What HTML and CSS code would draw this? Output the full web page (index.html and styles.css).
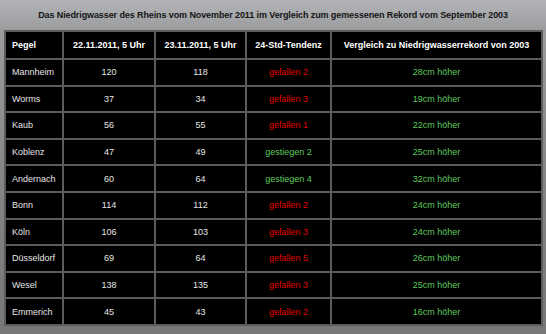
FILE: index.html
```html
<!DOCTYPE html>
<html lang="de">
<head>
<meta charset="utf-8">
<link rel="stylesheet" href="styles.css">
</head>
<body>
<div class="page">
  <h1 class="title">Das Niedrigwasser des Rheins vom November 2011 im Vergleich zum gemessenen Rekord vom September 2003</h1>
  <div class="frame">
    <table class="data">
      <colgroup>
        <col class="c1"><col class="c2"><col class="c3"><col class="c4"><col class="c5">
      </colgroup>
      <thead>
        <tr>
          <th class="left">Pegel</th>
          <th>22.11.2011, 5 Uhr</th>
          <th>23.11.2011, 5 Uhr</th>
          <th>24-Std-Tendenz</th>
          <th>Vergleich zu Niedrigwasserrekord von 2003</th>
        </tr>
      </thead>
      <tbody>
        <tr><td class="left">Mannheim</td><td>120</td><td>118</td><td class="down">gefallen 2</td><td class="up">28cm höher</td></tr>
        <tr><td class="left">Worms</td><td>37</td><td>34</td><td class="down">gefallen 3</td><td class="up">19cm höher</td></tr>
        <tr><td class="left">Kaub</td><td>56</td><td>55</td><td class="down">gefallen 1</td><td class="up">22cm höher</td></tr>
        <tr><td class="left">Koblenz</td><td>47</td><td>49</td><td class="up">gestiegen 2</td><td class="up">25cm höher</td></tr>
        <tr><td class="left">Andernach</td><td>60</td><td>64</td><td class="up">gestiegen 4</td><td class="up">32cm höher</td></tr>
        <tr><td class="left">Bonn</td><td>114</td><td>112</td><td class="down">gefallen 2</td><td class="up">24cm höher</td></tr>
        <tr><td class="left">Köln</td><td>106</td><td>103</td><td class="down">gefallen 3</td><td class="up">24cm höher</td></tr>
        <tr><td class="left">Düsseldorf</td><td>69</td><td>64</td><td class="down">gefallen 5</td><td class="up">26cm höher</td></tr>
        <tr><td class="left">Wesel</td><td>138</td><td>135</td><td class="down">gefallen 3</td><td class="up">25cm höher</td></tr>
        <tr><td class="left">Emmerich</td><td>45</td><td>43</td><td class="down">gefallen 2</td><td class="up">16cm höher</td></tr>
      </tbody>
    </table>
  </div>
</div>
</body>
</html>
```

FILE: styles.css
```css
html, body {
  margin: 0;
  padding: 0;
}
body {
  width: 546px;
  height: 334px;
  overflow: hidden;
  font-family: "Liberation Sans", Arial, sans-serif;
  background: linear-gradient(to bottom, #b2b4b7 0px, #9a9c9e 30px, #858585 180px, #777777 334px);
}
.page {
  display: flex;
  flex-direction: column;
  height: 334px;
}
.title {
  margin: 0;
  height: 29px;
  display: flex;
  align-items: center;
  justify-content: center;
  font-size: 9px;
  letter-spacing: -0.1px;
  font-weight: bold;
  color: #151515;
  white-space: nowrap;
}
.frame {
  padding: 1px 5px 0 4px;
}
.data {
  width: 537px;
  border-collapse: collapse;
  table-layout: fixed;
  background: #000;
  border: 2px solid #4a4a4a;
  font-size: 9px;
  color: #e6e6e6;
}
.c1 { width: 58px; }
.c2 { width: 92px; }
.c3 { width: 91px; }
.c4 { width: 85px; }
.c5 { width: 211px; }
.data th, .data td {
  border: 2px solid #5c5c5c;
  text-align: center;
  padding: 0 4px;
  height: 24.6px;
  white-space: nowrap;
}
.data th {
  font-weight: bold;
  color: #ffffff;
  height: 26px;
}
.data .left {
  text-align: left;
  padding-left: 6px;
}
.down { color: #e00000; }
.up { color: #5ec85e; }
```
